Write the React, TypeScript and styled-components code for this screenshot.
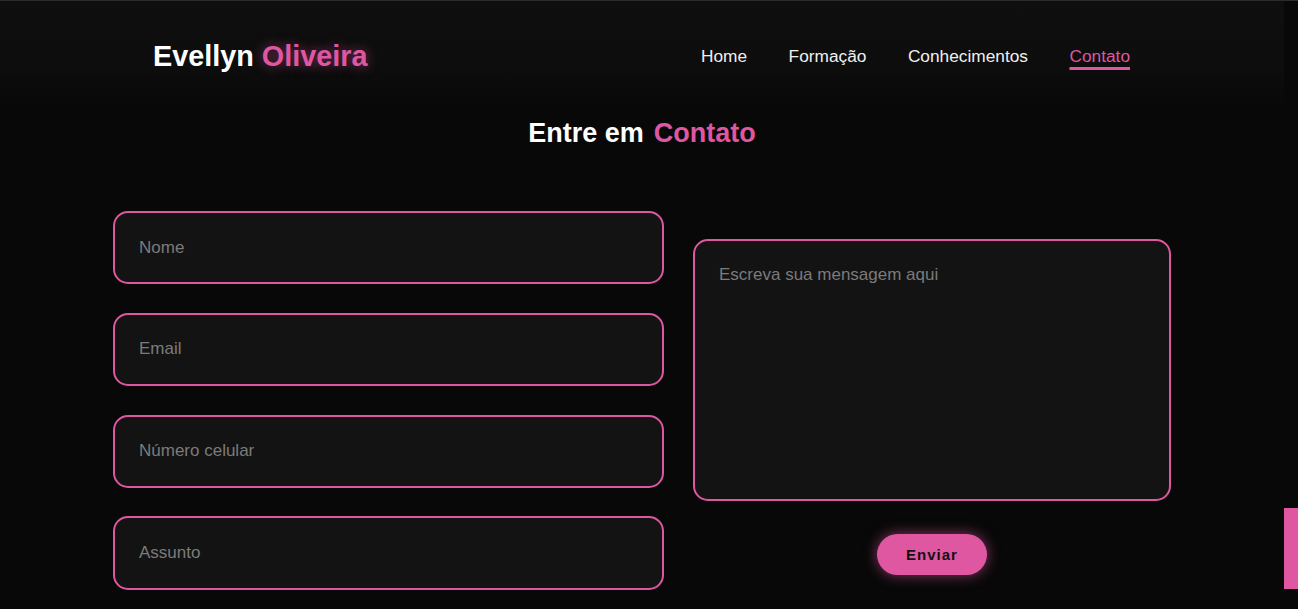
import React from "react";
import styled, { createGlobalStyle } from "styled-components";

const PINK = "#df57a1";

const GlobalStyle = createGlobalStyle`
  html, body { margin: 0; padding: 0; background: #080808; }
  body { font-family: "Liberation Sans", Arial, sans-serif; overflow: hidden; }
  * { box-sizing: border-box; }
`;

const Shell = styled.div`
  display: flex;
  height: 609px;
  border-top: 1px solid #2c2c2c;
  background: #080808;
`;

const Main = styled.div`
  flex: 1;
  display: flex;
  flex-direction: column;
  min-width: 0;
`;

const ScrollTrack = styled.div`
  width: 14px;
  display: flex;
  flex-direction: column;
  justify-content: flex-end;
  padding-bottom: 20px;
  background: #080808;
`;

const Thumb = styled.div`
  height: 81px;
  background: ${PINK};
`;

const Header = styled.header`
  height: 110px;
  display: flex;
  align-items: center;
  justify-content: space-between;
  padding: 0 154px 0 153px;
  background: linear-gradient(to bottom, #0f0f0f 0%, #0d0d0d 60%, #080808 100%);
`;

const Logo = styled.div`
  font-size: 28.8px;
  font-weight: 700;
  color: #ffffff;
`;

const Accent = styled.span<{ $glow?: boolean }>`
  color: ${PINK};
  text-shadow: ${(p) => (p.$glow ? "0 0 12px rgba(223, 87, 161, 0.55)" : "none")};
`;

const Nav = styled.nav`
  display: flex;
  gap: 41.5px;
`;

const NavLink = styled.a<{ $active?: boolean }>`
  font-size: 17.3px;
  color: ${(p) => (p.$active ? PINK : "#f0f0f0")};
  text-decoration: ${(p) => (p.$active ? "underline" : "none")};
  text-decoration-thickness: 3px;
  text-underline-offset: 5px;
  text-decoration-color: ${PINK};
  cursor: pointer;
`;

const Title = styled.h2`
  margin: 7px 0 0;
  display: flex;
  justify-content: center;
  gap: 10px;
  font-size: 27px;
  font-weight: 700;
  color: #ffffff;
`;

const Form = styled.form`
  margin-top: 62px;
  display: flex;
  justify-content: center;
  gap: 29px;
`;

const LeftCol = styled.div`
  width: 551px;
  display: flex;
  flex-direction: column;
  gap: 28.5px;
`;

const RightCol = styled.div`
  width: 478px;
  padding-top: 28px;
  display: flex;
  flex-direction: column;
  align-items: center;
  gap: 33px;
`;

const Field = styled.input`
  height: 73.3px;
  width: 100%;
  padding: 0 24px;
  border: 2px solid ${PINK};
  border-radius: 15px;
  background: #131313;
  color: #eee;
  font-family: "Liberation Sans", Arial, sans-serif;
  font-size: 17px;
  outline: none;
  &::placeholder { color: #7b7b7b; }
`;

const Message = styled.textarea`
  width: 100%;
  height: 262px;
  padding: 24px;
  border: 2px solid ${PINK};
  border-radius: 15px;
  background: #131313;
  color: #eee;
  font-family: "Liberation Sans", Arial, sans-serif;
  font-size: 17px;
  resize: none;
  outline: none;
  &::placeholder { color: #7b7b7b; }
`;

const SendButton = styled.button`
  width: 110px;
  height: 41px;
  border: none;
  border-radius: 21px;
  background: ${PINK};
  color: #111;
  font-family: "Liberation Sans", Arial, sans-serif;
  font-size: 15px;
  font-weight: 700;
  letter-spacing: 1px;
  box-shadow: 0 0 14px rgba(223, 87, 161, 0.6);
  cursor: pointer;
`;

export default function App() {
  return (
    <>
      <GlobalStyle />
      <Shell>
        <Main>
          <Header>
            <Logo>
              Evellyn <Accent $glow>Oliveira</Accent>
            </Logo>
            <Nav>
              <NavLink>Home</NavLink>
              <NavLink>Formação</NavLink>
              <NavLink>Conhecimentos</NavLink>
              <NavLink $active>Contato</NavLink>
            </Nav>
          </Header>
          <Title>
            <span>Entre em</span>
            <Accent>Contato</Accent>
          </Title>
          <Form onSubmit={(e) => e.preventDefault()}>
            <LeftCol>
              <Field placeholder="Nome" />
              <Field placeholder="Email" />
              <Field placeholder="Número celular" />
              <Field placeholder="Assunto" />
            </LeftCol>
            <RightCol>
              <Message placeholder="Escreva sua mensagem aqui" />
              <SendButton type="submit">Enviar</SendButton>
            </RightCol>
          </Form>
        </Main>
        <ScrollTrack>
          <Thumb />
        </ScrollTrack>
      </Shell>
    </>
  );
}
